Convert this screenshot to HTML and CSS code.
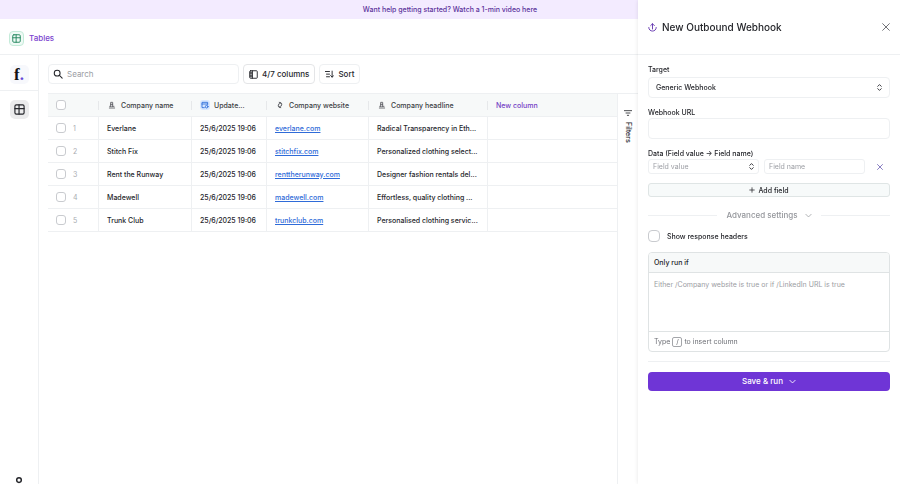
FILE: index.html
```html
<!DOCTYPE html>
<html lang="en">
<head>
<meta charset="utf-8">
<meta name="viewport" content="width=device-width, initial-scale=1">
<title>Tables</title>
<link rel="stylesheet" href="styles.css">
</head>
<body>
<svg class="sprite" aria-hidden="true">
  <symbol id="grid" viewBox="0 0 24 24"><rect x="2" y="2" width="20" height="20" rx="3"/><path d="M2 10h20M11 2v20"/></symbol>
  <symbol id="text-type" viewBox="0 0 24 24"><path d="M4 21h16M8 16V4h6v12M8 10h6M5 16h5M13 16h5"/></symbol>
  <symbol id="updown" viewBox="0 0 24 24"><path d="M6 8l6-6 6 6M6 16l6 6 6-6"/></symbol>
  <symbol id="down" viewBox="0 0 24 24"><path d="M3 8l9 9 9-9"/></symbol>
  <symbol id="cross" viewBox="0 0 24 24"><path d="M2 2l20 20M22 2L2 22"/></symbol>
</svg>

<div class="app">
  <a class="banner" href="#">Want help getting started? Watch a 1-min video here</a>
  <header class="topbar">
    <span class="topbar-icon"><svg class="icon"><use href="#grid"/></svg></span>
    <h1 class="topbar-title">Tables</h1>
  </header>
  <div class="body">
    <nav class="sidebar" aria-label="Main">
      <div class="brand"><a class="logo" href="#">f<span class="logo-dot">.</span></a></div>
      <a class="nav-item" href="#" aria-label="Tables"><svg class="icon"><use href="#grid"/></svg></a>
      <a class="account" href="#" aria-label="Account"><svg class="icon" viewBox="0 0 24 24"><circle cx="12" cy="7" r="4"/><path d="M4 23c0-5 3-7 8-7s8 2 8 7"/></svg></a>
    </nav>
    <main class="main">
      <div class="toolbar">
        <label class="search">
          <svg class="icon" viewBox="0 0 24 24"><circle cx="10" cy="10" r="7"/><path d="M15.500 15.500L22 22"/></svg>
          <input type="search" placeholder="Search" aria-label="Search">
        </label>
        <button class="tool tool-columns" type="button">
          <svg class="icon" viewBox="0 0 24 24"><rect x="2" y="2" width="20" height="20" rx="2"/><path d="M9 2v20M3 6h5M3 10h5M3 14h5M3 18h5"/></svg>4/7 columns
        </button>
        <button class="tool tool-sort" type="button">
          <svg class="icon" viewBox="0 0 24 24"><path d="M1 4h11M4 11h8M4 18h8M19 3v16M15 15l4 4 4-4"/></svg>Sort
        </button>
      </div>
      <div class="workspace">
        <div class="table-wrap">
          <table class="table">
            <colgroup><col class="c-check"><col class="c-name"><col class="c-date"><col class="c-site"><col class="c-head"><col></colgroup>
            <thead>
              <tr>
                <th><input class="check" type="checkbox" aria-label="Select all"></th>
                <th><span class="th"><svg class="icon type"><use href="#text-type"/></svg>Company name</span></th>
                <th><span class="th"><svg class="icon type type-date" viewBox="0 0 24 24"><path d="M10 20H3V4h17v6M3 9h17"/><circle cx="17" cy="17" r="4"/></svg>Update...</span></th>
                <th><span class="th"><svg class="icon type" viewBox="0 0 24 24"><path d="M9 8h9l-4-4M18 8a5 5 0 0 1-2 7M15 16H6l4 4M6 16a5 5 0 0 1 2-7" transform="rotate(-30 12 12)"/></svg>Company website</span></th>
                <th><span class="th"><svg class="icon type"><use href="#text-type"/></svg>Company headline</span></th>
                <th><button class="new-column" type="button">New column</button></th>
              </tr>
            </thead>
            <tbody>
              <tr><td><label class="pick"><input class="check" type="checkbox">1</label></td><td>Everlane</td><td>25/6/2025 19:06</td><td><a href="#">everlane.com</a></td><td>Radical Transparency in Eth...</td><td></td></tr>
              <tr><td><label class="pick"><input class="check" type="checkbox">2</label></td><td>Stitch Fix</td><td>25/6/2025 19:06</td><td><a href="#">stitchfix.com</a></td><td>Personalized clothing select...</td><td></td></tr>
              <tr><td><label class="pick"><input class="check" type="checkbox">3</label></td><td>Rent the Runway</td><td>25/6/2025 19:06</td><td><a href="#">renttherunway.com</a></td><td>Designer fashion rentals del...</td><td></td></tr>
              <tr><td><label class="pick"><input class="check" type="checkbox">4</label></td><td>Madewell</td><td>25/6/2025 19:06</td><td><a href="#">madewell.com</a></td><td>Effortless, quality clothing ...</td><td></td></tr>
              <tr><td><label class="pick"><input class="check" type="checkbox">5</label></td><td>Trunk Club</td><td>25/6/2025 19:06</td><td><a href="#">trunkclub.com</a></td><td>Personalised clothing servic...</td><td></td></tr>
            </tbody>
          </table>
        </div>
        <button class="filters" type="button">
          <svg class="icon" viewBox="0 0 24 24"><path d="M1 5h22M6 12h12M10 19h4"/></svg>
          <span class="filters-label">Filters</span>
        </button>
      </div>
    </main>
  </div>
</div>

<aside class="drawer" aria-labelledby="drawer-title">
  <header class="drawer-head">
    <svg class="icon drawer-icon" viewBox="0 0 24 24"><path d="M12 16V2M7 7l5-5 5 5M2 12c0 13 20 13 20 0"/></svg>
    <h2 class="drawer-title" id="drawer-title">New Outbound Webhook</h2>
    <button class="close" type="button" aria-label="Close"><svg class="icon"><use href="#cross"/></svg></button>
  </header>
  <form class="form">
    <div class="field field-target">
      <label for="target">Target</label>
      <span class="select"><select class="control" id="target"><option>Generic Webhook</option></select><svg class="icon"><use href="#updown"/></svg></span>
    </div>
    <div class="field">
      <label for="url">Webhook URL</label>
      <input class="control" id="url" type="url">
    </div>
    <div class="field">
      <label for="value">Data (Field value → Field name)</label>
      <div class="pair">
        <span class="select small"><select class="control" id="value"><option>Field value</option></select><svg class="icon"><use href="#updown"/></svg></span>
        <span class="small"><input class="control" type="text" placeholder="Field name" aria-label="Field name"></span>
        <button class="remove" type="button" aria-label="Remove field"><svg class="icon"><use href="#cross"/></svg></button>
      </div>
    </div>
    <button class="add" type="button"><svg class="icon" viewBox="0 0 24 24"><path d="M12 3v18M3 12h18"/></svg>Add field</button>
    <button class="advanced" type="button"><span class="advanced-label">Advanced settings<svg class="icon"><use href="#down"/></svg></span></button>
    <label class="headers"><input class="check large" type="checkbox">Show response headers</label>
    <div class="condition">
      <label class="condition-title" for="condition">Only run if</label>
      <textarea class="condition-text" id="condition" placeholder="Either /Company website is true or if /LinkedIn URL is true"></textarea>
      <div class="condition-hint">Type <kbd>/</kbd> to insert column</div>
    </div>
    <hr class="rule">
    <button class="save" type="button">Save &amp; run<svg class="icon"><use href="#down"/></svg></button>
  </form>
</aside>
</body>
</html>
```
FILE: styles.css
```css
:root {
  --drawer: 262px;
  --line: #eef0f2;
  --ink: #25262b;
  --purple: #6d35c4;
}

* { box-sizing: border-box; }

body {
  margin: 0;
  background: #fff;
  color: var(--ink);
  font: 500 7px/11px Inter, "Liberation Sans", sans-serif;
  overflow: hidden;
}

button, input, select, textarea { margin: 0; font: inherit; color: inherit; }
button { padding: 0; border: 0; background: none; cursor: pointer; }
h1, h2 { margin: 0; font-weight: 500; }
a { color: inherit; text-decoration: none; }
::placeholder { color: #9b9da3; opacity: 1; }

.sprite { display: none; }
.icon {
  flex: none;
  width: 8px;
  height: 8px;
  fill: none;
  stroke: currentColor;
  stroke-width: 2.500;
  stroke-linecap: round;
  stroke-linejoin: round;
}

.app { display: flex; flex-direction: column; height: 100vh; }

.banner {
  flex: none;
  height: 19px;
  background: #f3ebff;
  color: #5b329b;
  line-height: 19px;
  text-align: center;
}

.topbar {
  flex: none;
  display: flex;
  align-items: center;
  gap: 5px;
  height: 36px;
  padding: 3px 9px 0;
  border-bottom: 1px solid var(--line);
}
.topbar-icon {
  display: grid;
  place-items: center;
  width: 15px;
  height: 15px;
  border: 1px solid #c4ebd9;
  border-radius: 4px;
  background: #effaf5;
  color: #24885f;
}
.topbar-icon .icon { width: 9px; height: 9px; }
.topbar-title { color: #7c43cf; font-size: 8px; }

.body { flex: 1; display: flex; min-height: 0; }

.sidebar {
  flex: none;
  display: flex;
  flex-direction: column;
  align-items: center;
  width: 39px;
  border-right: 1px solid var(--line);
  overflow: hidden;
}
.brand {
  display: grid;
  place-items: center;
  width: 100%;
  height: 36px;
  padding-top: 3px;
  border-bottom: 1px solid var(--line);
}
.logo {
  width: 19px;
  height: 19px;
  border-radius: 5px;
  background: #f7f8fc;
  color: #111;
  font: 700 17px/19px "Liberation Serif", serif;
  text-align: center;
}
.logo-dot { color: #6848d8; }
.nav-item {
  display: grid;
  place-items: center;
  width: 19px;
  height: 19px;
  margin-top: 9px;
  border-radius: 5px;
  background: #ebebec;
}
.nav-item .icon { width: 11px; height: 11px; }
.account { flex: none; height: 8px; margin-top: auto; }
.account .icon { width: 14px; height: 14px; }

.main {
  flex: 1;
  display: flex;
  flex-direction: column;
  min-width: 0;
  padding: 9px var(--drawer) 0 9px;
}

.toolbar { display: flex; gap: 4px; padding-bottom: 9px; font-size: 8px; }
.search {
  display: flex;
  align-items: center;
  gap: 4px;
  width: 191px;
  height: 20px;
  padding: 0 4px;
  border: 1px solid var(--line);
  border-radius: 4px;
}
.search .icon { width: 10px; height: 10px; }
.search input { flex: 1; min-width: 0; padding: 0; border: 0; outline: 0; background: none; font-weight: 400; }
.tool {
  display: flex;
  align-items: center;
  gap: 4px;
  height: 20px;
  padding: 0 5px;
  border: 1px solid var(--line);
  border-radius: 4px;
}
.tool-columns { border-color: #e4e5e7; }
.tool .icon { width: 9px; height: 9px; }

.workspace { flex: 1; display: flex; min-height: 0; border-top: 1px solid var(--line); }
.table-wrap { flex: 1; min-width: 0; border-right: 1px solid var(--line); }
.table { width: 100%; border-collapse: separate; border-spacing: 0; table-layout: fixed; }
.c-check { width: 51px; }
.c-name { width: 93px; }
.c-date { width: 75px; }
.c-site { width: 102px; }
.c-head { width: 119px; }
.table th, .table td {
  height: 23px;
  padding: 0 8px;
  border-bottom: 1px solid var(--line);
  font-weight: 500;
  text-align: left;
  white-space: nowrap;
}
.table th { background: #f7f9f9; color: #3c3e43; }
.table td:not(:last-child) { border-right: 1px solid var(--line); }
.table th:not(:last-child) {
  background: linear-gradient(#e6e8ea, #e6e8ea) right center / 1px 9px no-repeat #f7f9f9;
}
.table td a { color: #2f6bd8; text-decoration: underline; }
.th { display: flex; align-items: center; gap: 4px; }
.type { width: 10px; height: 10px; padding: 1px; color: #55575d; }
.type-date { border-radius: 3px; background: #d7e7ff; color: #2468d8; }
.pick { display: flex; align-items: center; gap: 7px; color: #a9abb0; font-weight: 400; }
.new-column { color: #7440c5; font-weight: 500; }

.check {
  appearance: none;
  flex: none;
  display: block;
  width: 10px;
  height: 10px;
  border: 1px solid #c9cbcf;
  border-radius: 3px;
  background: #fff;
}
.check:checked { background: var(--purple); }
.check.large { width: 12px; height: 12px; border-radius: 4px; }

.filters {
  flex: none;
  display: flex;
  flex-direction: column;
  align-items: center;
  gap: 5px;
  width: 20px;
  padding-top: 15px;
}
.filters-label { writing-mode: vertical-rl; }

.drawer {
  position: fixed;
  inset: 0 0 0 auto;
  width: var(--drawer);
  background: #fff;
  box-shadow: 0 0 4px rgb(0 0 0 / 10%);
}
.drawer-head {
  display: flex;
  align-items: center;
  gap: 5px;
  height: 55px;
  padding: 0 10px;
  border-bottom: 1px solid var(--line);
}
.drawer-icon { width: 9px; height: 9px; color: #6537b0; }
.drawer-title { font-size: 10px; }
.close { display: grid; margin-left: auto; color: #55575d; }

.form { display: flex; flex-direction: column; padding: 9px 10px; }
.field { display: flex; flex-direction: column; margin-bottom: 9px; }
.field-target { gap: 2px; }
.control {
  appearance: none;
  display: block;
  width: 100%;
  height: 21px;
  padding: 0 7px;
  border: 1px solid var(--line);
  border-radius: 4px;
  background: #fff;
}
.select { display: grid; align-items: center; }
.select > * { grid-area: 1 / 1; }
.select .icon { width: 7px; height: 7px; justify-self: end; margin-right: 7px; stroke-width: 3; pointer-events: none; }
.pair { display: grid; grid-template-columns: 111px 1fr 20px; gap: 5px; }
.small .control { height: 15px; padding: 0 4px; border-radius: 3px; color: #9b9da3; font-weight: 400; }
.small.select .icon { margin-right: 4px; }
.remove { display: grid; place-items: center; color: #6254ae; }
.remove .icon { width: 6px; height: 6px; stroke-width: 3; }

.add {
  display: flex;
  align-items: center;
  justify-content: center;
  gap: 3px;
  height: 14px;
  border: 1px solid #dfe5e5;
  border-radius: 3px;
  background: #f7fafa;
}
.add .icon { width: 6px; height: 6px; stroke-width: 3; }

.advanced {
  display: flex;
  align-items: center;
  gap: 9px;
  margin-top: 13px;
  color: #94969b;
  font-size: 8px;
}
.advanced::before, .advanced::after { content: ""; flex: 1; height: 1px; background: var(--line); }
.advanced-label { display: flex; align-items: center; gap: 7px; }
.advanced .icon { width: 7px; height: 7px; }

.headers { display: flex; align-items: center; gap: 7px; margin-top: 9px; }

.condition {
  display: flex;
  flex-direction: column;
  margin-top: 10px;
  border: 1px solid #dfe3e4;
  border-radius: 4px;
  overflow: hidden;
}
.condition-title { padding: 4px 5px; background: #f7f9f9; }
.condition-text {
  display: block;
  height: 60px;
  padding: 6px 5px;
  border: 1px solid #dfe3e4;
  border-width: 1px 0;
  outline: 0;
  resize: none;
  font-weight: 400;
}
.condition-hint { display: flex; align-items: center; gap: 2px; height: 19px; padding: 0 5px; color: #6d6f75; font-weight: 400; }
.condition-hint kbd {
  width: 10px;
  height: 10px;
  border: 1px solid #a4a6aa;
  border-radius: 2px;
  font: inherit;
  line-height: 8px;
  text-align: center;
}

.rule { width: 100%; height: 1px; margin: 9px 0 10px; border: 0; background: var(--line); }
.save {
  display: flex;
  align-items: center;
  justify-content: center;
  gap: 6px;
  height: 19px;
  border-radius: 4px;
  background: #6f35d6;
  color: #fff;
  font-size: 8px;
}
.save .icon { width: 7px; height: 7px; stroke-width: 3; }
```
